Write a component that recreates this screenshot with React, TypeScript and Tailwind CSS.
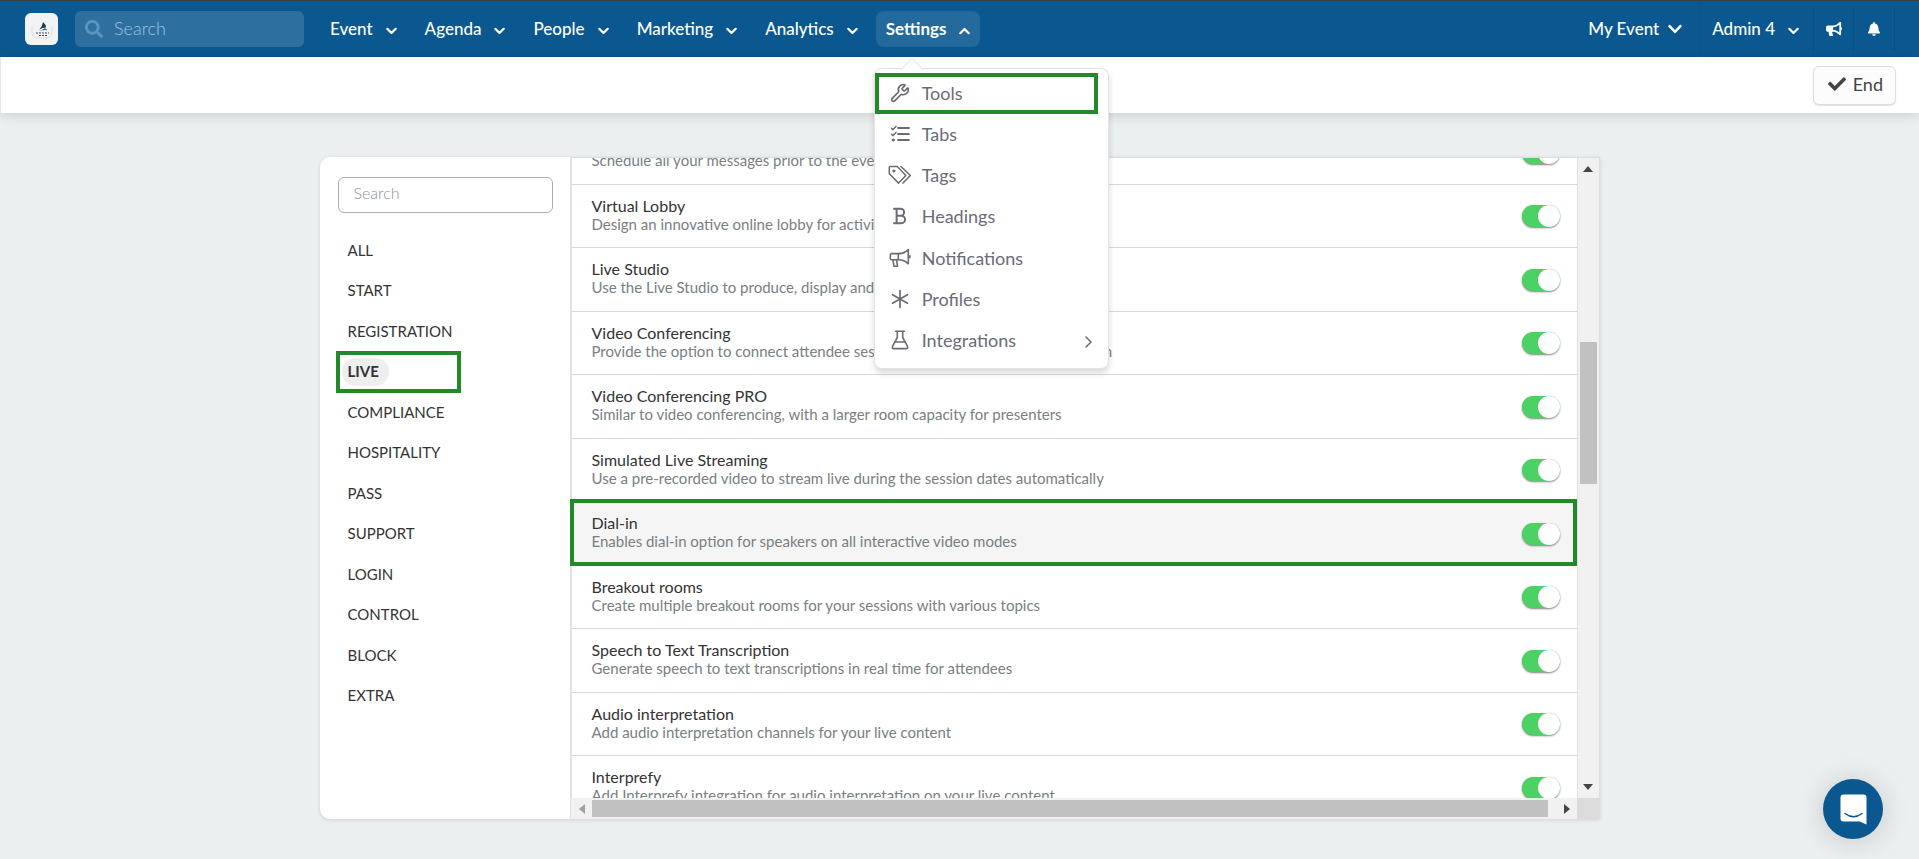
import React, { useState } from "react"
import { Wrench } from "lucide-react"
import { FaBell, FaBullhorn, FaCheck, FaChevronDown, FaSearch } from "react-icons/fa"

interface Tool {
  name: string
  description: string
}

const TOOLS: Tool[] = [
  { name: "Scheduled Messages", description: "Schedule all your messages prior to the event" },
  { name: "Virtual Lobby", description: "Design an innovative online lobby for activities" },
  { name: "Live Studio", description: "Use the Live Studio to produce, display and stream" },
  { name: "Video Conferencing", description: "Provide the option to connect attendee sessions by video with the presentation" },
  { name: "Video Conferencing PRO", description: "Similar to video conferencing, with a larger room capacity for presenters" },
  { name: "Simulated Live Streaming", description: "Use a pre-recorded video to stream live during the session dates automatically" },
  { name: "Dial-in", description: "Enables dial-in option for speakers on all interactive video modes" },
  { name: "Breakout rooms", description: "Create multiple breakout rooms for your sessions with various topics" },
  { name: "Speech to Text Transcription", description: "Generate speech to text transcriptions in real time for attendees" },
  { name: "Audio interpretation", description: "Add audio interpretation channels for your live content" },
  { name: "Interprefy", description: "Add Interprefy integration for audio interpretation on your live content" },
]

const CATEGORIES = [
  "ALL", "START", "REGISTRATION", "LIVE", "COMPLIANCE", "HOSPITALITY",
  "PASS", "SUPPORT", "LOGIN", "CONTROL", "BLOCK", "EXTRA",
]

const NAV_ITEMS = ["Event", "Agenda", "People", "Marketing", "Analytics"]

const HIGHLIGHT = "border-4 border-[#248a29]"

const Chevron = ({ up = false }: { up?: boolean }) => (
  <svg width="11" height="8" viewBox="0 0 11 8" fill="none" stroke="currentColor" strokeWidth="2.2" strokeLinejoin="round" strokeLinecap="round" className={up ? "mt-1 rotate-180" : "mt-1"}>
    <path d="M1.3 1.8 5.5 6l4.2-4.2" />
  </svg>
)

const iconProps = {
  fill: "none",
  stroke: "currentColor",
  strokeWidth: 1.5,
  strokeLinejoin: "round" as const,
  strokeLinecap: "round" as const,
}

const TasksIcon = () => (
  <svg width="20" height="18" viewBox="0 0 20 18" {...iconProps}>
    <path d="M8 3h11M8 9h11M8 15h11" strokeWidth="1.8" />
    <path d="M1.5 3.2 3 4.6l3-3.2M1.5 9.2 3 10.6l3-3.2" />
    <circle cx="3.2" cy="15" r="1.1" fill="currentColor" strokeWidth="1" />
  </svg>
)

const TagsIcon = () => (
  <svg width="24" height="20" viewBox="0 0 24 20" {...iconProps}>
    <path d="M1.3 2.3v6.5l9.3 9.3 7.3-7.6L9.3 1.5 2.1 1.5q-.8 0-.8.8z" />
    <path d="M13 1.5l9.4 9-7.4 7.6" />
    <circle cx="5.8" cy="6" r="1.1" fill="currentColor" strokeWidth="1" />
  </svg>
)

const BoldIcon = () => (
  <svg width="16" height="18" viewBox="0 0 16 18" {...iconProps} strokeWidth="2" strokeLinejoin="miter">
    <path d="M2 1.8h6.6a3.5 3.5 0 0 1 0 7H4.6M4.6 8.8h4.8a3.7 3.7 0 0 1 0 7.4H2M4.6 1.8v14.4" />
  </svg>
)

const MegaphoneIcon = () => (
  <svg width="22" height="20" viewBox="0 0 22 20" {...iconProps} strokeWidth="1.6">
    <path d="M2.6 5.6H10q5 0 9.3-4v14.2q-4.3-4-9.3-4H2.6q-1.3 0-1.3-1.3V6.9q0-1.3 1.3-1.3z" />
    <path d="M9.3 5.8v5.8M4 12l1 6.3h3.6L7.5 12M20.9 7.7v2" />
  </svg>
)

const AsteriskIcon = () => (
  <svg width="20" height="20" viewBox="0 0 20 20" {...iconProps} strokeWidth="1.7">
    <path d="M10 1.5v17M2.5 5.7l15 8.6M17.5 5.7l-15 8.6" />
  </svg>
)

const FlaskIcon = () => (
  <svg width="18" height="20" viewBox="0 0 18 20" {...iconProps} strokeWidth="1.6">
    <path d="M4.5 1.3h9M6.3 1.3v6.2L1.6 16.2q-1 2.4 1.3 2.4h12.2q2.3 0 1.3-2.4L11.7 7.5V1.3M4.3 12h9.4" />
  </svg>
)

const MENU_ITEMS = [
  { label: "Tools", icon: <Wrench size={20} strokeWidth={2} /> },
  { label: "Tabs", icon: <TasksIcon /> },
  { label: "Tags", icon: <TagsIcon /> },
  { label: "Headings", icon: <BoldIcon /> },
  { label: "Notifications", icon: <MegaphoneIcon /> },
  { label: "Profiles", icon: <AsteriskIcon /> },
  { label: "Integrations", icon: <FlaskIcon /> },
]

function SettingsMenu() {
  return (
    <div className="absolute top-[57px] -left-0.5 z-20 h-[301px] w-[235px] rounded-lg border border-[#e3e4e6] bg-white pt-1 pb-1.5 shadow-[0_4px_6px_rgba(0,0,0,0.15)]">
      <svg width="22" height="12" viewBox="0 0 22 12" className="absolute -top-[11px] left-[26px]">
        <path d="M0 11.5 11 .7 22 11.5" fill="#fff" stroke="#dfe0e2" />
      </svg>
      <ul className="grid h-full grid-rows-7 text-lg text-[#6b6b76]">
        {MENU_ITEMS.map(item => (
          <li key={item.label} className="relative">
            <a href="#" className="flex h-full items-center pr-4 pb-0.5 pl-[13px]">
              <span className="flex w-6 justify-center">{item.icon}</span>
              <span className="ml-2.5 flex-1">{item.label}</span>
              {item.label === "Integrations" && (
                <svg width="7" height="12" viewBox="0 0 7 12" {...iconProps} className="mt-1">
                  <path d="M1 1l5 5-5 5" />
                </svg>
              )}
            </a>
            {item.label === "Tools" && <span className={`absolute inset-y-0 right-2.5 left-0 ${HIGHLIGHT}`} />}
          </li>
        ))}
      </ul>
    </div>
  )
}

function Navbar() {
  return (
    <header className="flex h-[57px] shrink-0 items-center border-t border-[#3d4043] bg-[#0b5890] pr-6 pl-[25px] text-[17px] text-white">
      <a href="#" aria-label="Home" className="flex h-8 w-[33px] items-center justify-center rounded-md bg-[#f1f3f4]">
        <svg width="22" height="20" viewBox="0 0 22 20">
          <path d="M1 7v6q0 6 6 6h8q6 0 6-6V7" fill="none" stroke="#dde0e2" />
          <path d="M12 3q3 2.5 3 5.5-3.500 0-6.500 2Q11.500 7 12 3z" fill="#1c3550" />
          <path d="M7.5 12q3.500-.5 6.500-3l2.500 2q-4.500 0-9 1z" fill="#2b78a8" />
          <path d="M5 14h13M8 16.500h8" stroke="#3c4650" strokeWidth="1" strokeDasharray="2 1" />
        </svg>
      </a>
      <label className="ml-[17px] flex h-9 w-[229px] items-center rounded-md bg-[#2d6f9f] pl-2.5">
        <FaSearch size={18} className="text-[#5c95c0]" />
        <input type="text" aria-label="Search" placeholder="Search" className="ml-[11px] w-40 bg-transparent pb-0.5 text-lg font-light outline-none placeholder:text-[#9cc4e2]" />
      </label>
      <nav className="ml-4 flex gap-2">
        {NAV_ITEMS.map(item => (
          <button key={item} className="flex h-9 items-center gap-[13px] rounded-lg px-2.5 pb-px font-medium">
            {item}
            <Chevron />
          </button>
        ))}
        <div className="relative">
          <button className="flex h-9 items-center gap-[13px] rounded-lg bg-white/10 px-2.5 pb-px font-bold">
            Settings
            <Chevron up />
          </button>
          <SettingsMenu />
        </div>
      </nav>
      <div className="ml-auto flex h-full items-center font-medium">
        <button className="flex h-full items-center gap-2 border-r border-[#0a5389] pr-4 pb-px">
          My Event
          <FaChevronDown size={16} />
        </button>
        <button className="flex h-full items-center gap-[13px] px-3 pr-[14px] pb-px">
          Admin 4
          <Chevron />
        </button>
        <button aria-label="Announcements" className="flex h-11 w-10 items-center justify-center border-l border-[#0a4f83]">
          <FaBullhorn size={16} />
        </button>
        <button aria-label="Alerts" className="flex h-11 w-[42px] items-center justify-center border-x border-[#0a4f83]">
          <FaBell size={14} />
        </button>
      </div>
    </header>
  )
}

function Sidebar({ active, onSelect }: { active: string; onSelect: (category: string) => void }) {
  return (
    <aside className="w-[250px] shrink-0 pt-5 pl-[18px]">
      <input
        type="text"
        aria-label="Search tools"
        placeholder="Search"
        className="h-9 w-[215px] rounded-md border border-[#a9adaf] px-[15px] pb-1.5 text-base font-light outline-none placeholder:text-[#8c9396]"
      />
      <ul className="mt-[17px] text-[15px] text-[#333]">
        {CATEGORIES.map(category => (
          <li key={category} className="relative flex items-center odd:h-10 even:h-[41px]">
            <button
              onClick={() => onSelect(category)}
              className={category === active
                ? "ml-1 h-7 rounded-full bg-[#eeeeef] pr-2.5 pl-1.5 font-bold"
                : "ml-2.5 h-7"}
            >
              {category}
            </button>
            {category === active && <span className={`absolute top-0 -left-0.5 h-[42px] w-[125px] ${HIGHLIGHT}`} />}
          </li>
        ))}
      </ul>
    </aside>
  )
}

function ToolRow({ tool }: { tool: Tool }) {
  const [enabled, setEnabled] = useState(true)
  const highlighted = tool.name === "Dial-in"

  return (
    <li className={`relative border-b border-l-2 border-b-[#d7d9da] border-l-[#e0e2e3] first:-mt-[37px] odd:h-16 even:h-[63px] ${highlighted ? "bg-[#f5f5f5]" : "bg-white"}`}>
      <label className="flex h-full items-center justify-between pr-[17px] pl-5">
        <span className="flex flex-col pb-1">
          <span className="text-base leading-5 text-[#333]">{tool.name}</span>
          <span className="text-[15px] leading-[17px] text-[#788082]">{tool.description}</span>
        </span>
        <input
          type="checkbox"
          checked={enabled}
          onChange={e => setEnabled(e.target.checked)}
          className="flex h-[22px] w-[38px] appearance-none rounded-full bg-[#c9cccd] shadow-[0_1px_2px_rgba(0,0,0,0.5)] before:block before:size-[22px] before:rounded-full before:bg-white checked:justify-end checked:bg-[#4bd164]"
        />
      </label>
      {highlighted && <span className={`absolute -top-[3px] right-0 -bottom-px -left-0.5 z-10 ${HIGHLIGHT}`} />}
    </li>
  )
}

function ToolList() {
  return (
    <section className="grid min-w-0 flex-1 grid-cols-[1fr_23px] grid-rows-[1fr_21px]">
      <ul className="min-h-0 overflow-hidden border-t border-[#dcdfe0]">
        {TOOLS.map(tool => <ToolRow key={tool.name} tool={tool} />)}
      </ul>
      <div className="flex min-h-0 flex-col items-center border-x border-t border-[#dcdfe0] bg-[#f1f1f1] py-2">
        <svg width="10" height="6" viewBox="0 0 10 6"><path d="M0 6 5 0l5 6z" fill="#454549" /></svg>
        <div className="flex min-h-0 w-[17px] flex-1 flex-col py-2">
          <div className="flex-[162]" />
          <div className="flex-[142] bg-[#c1c1c1]" />
          <div className="flex-[292]" />
        </div>
        <svg width="10" height="6" viewBox="0 0 10 6"><path d="M0 0h10L5 6z" fill="#454549" /></svg>
      </div>
      <div className="flex items-center border-l border-[#e0e2e3] bg-[#f1f1f1]">
        <svg width="6" height="10" viewBox="0 0 6 10" className="ml-2"><path d="M6 0v10L0 5z" fill="#a0a0a0" /></svg>
        <div className="ml-[7px] h-[17px] flex-1 bg-[#c1c1c1]" />
        <svg width="6" height="10" viewBox="0 0 6 10" className="mr-[7px] ml-4"><path d="M0 0v10l6-5z" fill="#454549" /></svg>
      </div>
      <div className="bg-[#dcdcdc]" />
    </section>
  )
}

export default function App() {
  const [active, setActive] = useState("LIVE")

  return (
    <div className="flex h-screen flex-col bg-[#ebeff0] font-[Lato,sans-serif]">
      <Navbar />
      <div className="flex h-14 shrink-0 items-start justify-end border-l border-[#e4e8e9] bg-white pt-[9px] pr-[23px] shadow-[0_2px_12px_rgba(0,0,0,0.14)]">
        <button className="flex h-[39px] items-center gap-[7px] rounded-md border border-[#dcdedf] bg-[#fcfcfd] pr-3 pb-1 pl-[14px] text-lg text-[#444] shadow-[0_1px_1px_rgba(0,0,0,0.12)]">
          <FaCheck size={18} />
          <span>End</span>
        </button>
      </div>
      <main className="flex min-h-0 flex-1 justify-center pt-11 pb-10">
        <div className="flex w-[1280px] overflow-hidden rounded-l-[10px] bg-white shadow-[0_1px_4px_rgba(0,0,0,0.12)]">
          <Sidebar active={active} onSelect={setActive} />
          <ToolList />
        </div>
      </main>
      <button aria-label="Open chat" className="fixed right-9 bottom-5 flex size-[60px] items-center justify-center rounded-full bg-[#0b5890] shadow-[0_2px_28px_rgba(0,0,0,0.16)]">
        <svg width="27" height="31" viewBox="0 0 27 31">
          <path d="M3.5.5h20q3 0 3 3v27l-7-3h-16q-3 0-3-3v-21q0-3 3-3z" fill="#fff" />
          <path d="M5 19.5q8.5 6.5 17 0" fill="none" stroke="#0b5890" strokeWidth="1.5" strokeLinecap="round" />
        </svg>
      </button>
    </div>
  )
}
